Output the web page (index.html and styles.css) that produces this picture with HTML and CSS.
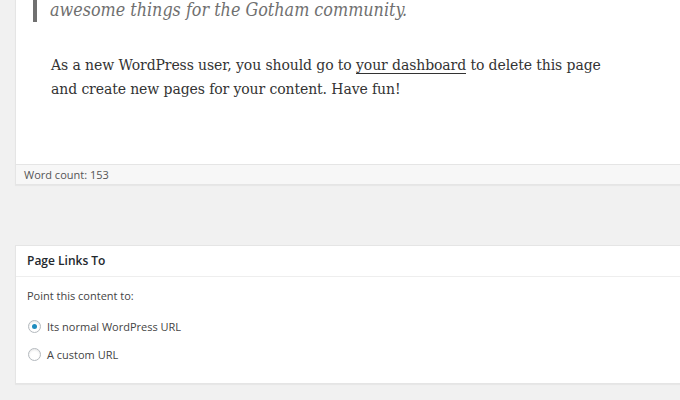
FILE: index.html
```html
<!DOCTYPE html>
<html>
<head>
<meta charset="utf-8">
<link rel="stylesheet" href="styles.css">
</head>
<body>
<div class="page">
  <div class="editor">
    <div class="content">
      <blockquote class="quote">awesome things for the Gotham community.</blockquote>
      <p class="text">As a new WordPress user, you should go to <a class="link" href="#">your dashboard</a> to delete this page and create new pages for your content. Have fun!</p>
    </div>
    <div class="status">Word count: 153</div>
  </div>
  <div class="postbox">
    <h2 class="hndle">Page Links To</h2>
    <div class="inside">
      <p class="intro">Point this content to:</p>
      <label class="option"><span class="radio checked"></span>Its normal WordPress URL</label>
      <label class="option"><span class="radio"></span>A custom URL</label>
    </div>
  </div>
</div>
</body>
</html>
```

FILE: styles.css
```css
html, body {
  margin: 0;
  padding: 0;
  background: #f1f1f1;
  overflow: hidden;
  width: 680px;
  height: 400px;
}
.page {
  padding-left: 15px;
  font-family: "Open Sans", "Noto Sans", sans-serif;
  color: #444;
}
.editor {
  background: #fff;
  border: 1px solid #e5e5e5;
  border-top: 0;
  margin-right: -30px;
  box-shadow: 0 1px 1px rgba(0,0,0,0.04);
}
.content {
  padding: 0 0 63px 17px;
  font-family: "DejaVu Serif", serif;
}
.quote {
  margin: -5px 0 0 0;
  border-left: 4px solid #707070;
  padding-left: 13px;
  font-family: "DejaVu Serif Condensed", "DejaVu Serif", serif;
  font-stretch: condensed;
  font-style: italic;
  font-size: 17.8px;
  line-height: 30px;
  height: 27px;
  color: #707070;
}
.text {
  margin: 31px 0 0 18px;
  font-size: 14px;
  letter-spacing: -0.1px;
  line-height: 24px;
  color: #333;
  width: 560px;
}
.link {
  color: #333;
  text-decoration: none;
  border-bottom: 1px solid #333;
}
.status {
  background: #f7f7f7;
  border-top: 1px solid #e5e5e5;
  font-size: 11px;
  line-height: 19px;
  padding-left: 8px;
  color: #555;
}
.postbox {
  margin-top: 60px;
  margin-right: -30px;
  background: #fff;
  border: 1px solid #e5e5e5;
  box-shadow: 0 1px 1px rgba(0,0,0,0.04);
}
.hndle {
  margin: 0;
  padding: 0 11px;
  font-size: 12px;
  font-weight: 600;
  line-height: 30px;
  color: #23282d;
  border-bottom: 1px solid #eee;
}
.inside {
  padding: 10px 11px 15px;
  display: flex;
  flex-direction: column;
}
.intro {
  margin: 0 0 7px;
  font-size: 11px;
  line-height: 18px;
}
.option {
  display: flex;
  align-items: center;
  height: 28px;
  font-size: 11px;
}
.radio {
  box-sizing: border-box;
  width: 13px;
  height: 13px;
  margin-left: 1px;
  border: 1px solid #b4b9be;
  border-radius: 50%;
  box-shadow: inset 0 1px 2px rgba(0,0,0,0.1);
  margin-right: 6px;
  display: flex;
  align-items: center;
  justify-content: center;
}
.radio.checked::before {
  content: "";
  width: 5px;
  height: 5px;
  border-radius: 50%;
  background: #1e8cbe;
}
```
